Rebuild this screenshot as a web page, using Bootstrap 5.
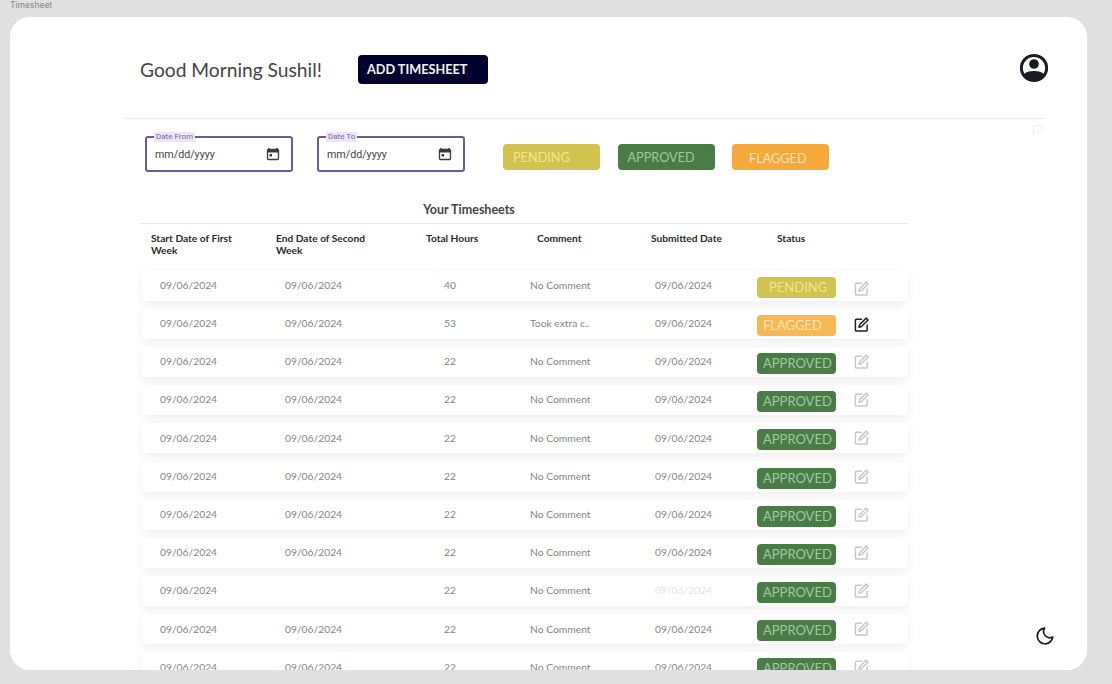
<!DOCTYPE html>
<html lang="en">
<head>
  <meta charset="UTF-8" />
  <meta name="viewport" content="width=device-width, initial-scale=1" />
  <title>Timesheet</title>
  <link href="https://cdn.jsdelivr.net/npm/bootstrap@5.3.0/dist/css/bootstrap.min.css" rel="stylesheet" />
  <style>
    html, body { height: 684px; overflow: hidden; }
    body { background: #e0e0e0; font-family: Lato, sans-serif; }
    .frame-label { font: 8.5px/1 Inter, sans-serif; color: #8a8a8a; padding: 1px 0 0 10px; height: 17px; }
    .frame {
      position: relative; margin-left: 10px; width: 1077px; height: 653px;
      background: #fff; border-radius: 20px; overflow: hidden;
    }
    .top-bar { height: 101px; padding: 37px 38px 0 130px; }
    .greeting { font-size: 19.2px; line-height: 32px; color: #444; width: 218px; margin: 0; }
    .add-btn {
      width: 130px; height: 29px; margin-top: 1px; padding: 0 0 0 9px; text-align: left; border-radius: 4px;
      background: #03012e; color: #f2f2f2; font-size: 12.7px; font-weight: 700; border: 0;
    }
    .add-btn:hover { background: #03012e; color: #fff; }
    .avatar-icon { margin-top: -1px; }
    .divider { margin: 0 42px 0 115px; height: 1px; background: #ececec; }
    .filters { padding: 17px 40px 0 135px; height: 82px; }
    .date-box {
      position: relative; width: 148px; height: 36px; padding: 0 18px 0 8px;
      border: 2px solid #6d5b98; border-radius: 3px; background: #fff;
      font: 10.7px Roboto, sans-serif; color: #444;
    }
    .date-label {
      position: absolute; left: 7px; top: -6px; padding: 0 2px; background: #ece5f4;
      font: 8px/10px Roboto, sans-serif; color: #75659d;
    }
    .legend-tag {
      width: 97px; height: 26px; margin-top: 8px; padding-left: 10px; border-radius: 4px;
      font-size: 12.7px; line-height: 26px;
    }
    .tag-pending { background: #d2c350; color: #efe88f; }
    .tag-approved { background: #4a7c46; color: #9fc9a2; }
    .tag-flagged { background: #f5a93b; color: #fde3bd; padding-left: 17px; line-height: 28px; }
    .sheet { width: 768px; margin-left: 130px; }
    .sheet-title {
      height: 23px; padding: 0 110px 0 0; margin: 0; font-size: 12.5px; font-weight: 700; line-height: 17px;
      color: #444; text-align: center; border-bottom: 1px solid #e8e8e8;
    }
    .sheet-head, .sheet-row { display: grid; margin-left: 2px; }
    .sheet-head {
      grid-template-columns: 125px 150px 111px 114px 126px 60px; padding: 8px 0 0 9px; height: 46.600px;
      font-size: 10.2px; font-weight: 700; line-height: 12px; color: #2a2a2a;
    }
    .sheet-row {
      grid-template-columns: 125px 159px 86px 125px 102px 97px 20px; align-items: center;
      height: 30px; margin-bottom: 8.2px; padding-left: 18px; background: #fff; border-radius: 4px;
      box-shadow: 0 3px 10px rgba(0, 0, 0, .07); font-size: 10.3px; color: #858585;
    }
    .row-faded { color: #e2e2e2; }
    .row-badge {
      display: block; width: 79px; height: 21px; margin-top: 3px; border-radius: 4px; padding-left: 6px;
      font-size: 13px; line-height: 21px; white-space: nowrap;
    }
    .row-flagged { background: #f6b952; color: #fde5bb; }
    .row-pending { padding-left: 12px; }
    .edit-icon { display: flex; margin-top: -1px; color: #c8c8c8; }
    .edit-dark { margin-top: 2px; color: #222; }
    .edit-first { margin-top: 5px; }
    .moon { position: absolute; left: 1026px; top: 610px; }
  </style>
</head>
<body>
  <div class="frame-label">Timesheet</div>
  <main class="frame">
    <header class="top-bar d-flex align-items-start">
      <h1 class="greeting fw-normal">Good Morning Sushil!</h1>
      <button class="btn add-btn">ADD TIMESHEET</button>
      <svg class="avatar-icon ms-auto" width="30" height="30" viewBox="0 0 30 30" aria-label="Profile">
        <circle cx="15" cy="15" r="12.600" fill="none" stroke="#1a1a22" stroke-width="3"/>
        <circle cx="15" cy="11" r="4.800" fill="#1a1a22"/>
        <path d="M5 21c2.800-2.400 6.300-3 10-3s7.200.6 10 3A12.500 12.500 0 0 1 15 27.500 12.500 12.500 0 0 1 5 21z" fill="#1a1a22"/>
      </svg>
    </header>
    <div class="divider"></div>

    <section class="filters d-flex align-items-start">
      <div class="date-box d-flex align-items-center justify-content-between me-4">
        <span class="date-label">Date From</span>
        <span>mm/dd/yyyy</span>
        <svg class="flex-shrink-0" style="margin-right:-7px" width="14" height="14" viewBox="0 0 14 14"><path d="M3 1v1.500M11 1v1.500" stroke="#3a3a3a" stroke-width="1.400"/><rect x="1.500" y="2.500" width="11" height="10" rx="1" fill="none" stroke="#3a3a3a" stroke-width="1.300"/><path d="M1.500 2.500h11V5.500h-11z" fill="#3a3a3a"/><rect x="3.500" y="7" width="2.500" height="2.500" fill="#3a3a3a"/></svg>
      </div>
      <div class="date-box d-flex align-items-center justify-content-between">
        <span class="date-label">Date To</span>
        <span>mm/dd/yyyy</span>
        <svg class="flex-shrink-0" style="margin-right:-7px" width="14" height="14" viewBox="0 0 14 14"><path d="M3 1v1.500M11 1v1.500" stroke="#3a3a3a" stroke-width="1.400"/><rect x="1.500" y="2.500" width="11" height="10" rx="1" fill="none" stroke="#3a3a3a" stroke-width="1.300"/><path d="M1.500 2.500h11V5.500h-11z" fill="#3a3a3a"/><rect x="3.500" y="7" width="2.500" height="2.500" fill="#3a3a3a"/></svg>
      </div>
      <div class="legend-tag tag-pending" style="margin-left:38px">PENDING</div>
      <div class="legend-tag tag-approved" style="margin-left:17.500px">APPROVED</div>
      <div class="legend-tag tag-flagged" style="margin-left:17.500px">FLAGGED</div>
      <svg class="ms-auto" style="margin-top:-12px;margin-right:3px" width="12" height="13" viewBox="0 0 12 13"><path d="M1.500 12.500V1.500h9.500l-1.500 3 1.500 3H1.500" fill="none" stroke="#f0f0f0"/></svg>
    </section>

    <section class="sheet">
      <h2 class="sheet-title">Your Timesheets</h2>
      <div class="sheet-head">
        <div>Start Date of First<br>Week</div>
        <div>End Date of Second<br>Week</div>
        <div>Total Hours</div>
        <div>Comment</div>
        <div>Submitted Date</div>
        <div>Status</div>
      </div>
      <div id="rows"></div>
    </section>

    <svg class="moon" width="18" height="18" viewBox="0 0 18 18" aria-label="Dark mode"><path d="M8.500 1.200a7.800 7.800 0 1 0 8.300 8.800 6.300 6.300 0 0 1-8.300-8.800z" fill="none" stroke="#1c1c1c" stroke-width="1.700" stroke-linejoin="round"/></svg>
  </main>

  <script>
    const rows = [
      ['09/06/2024', '09/06/2024', '40', 'No Comment', '09/06/2024', 'PENDING'],
      ['09/06/2024', '09/06/2024', '53', 'Took extra c..', '09/06/2024', 'FLAGGED'],
      ['09/06/2024', '09/06/2024', '22', 'No Comment', '09/06/2024', 'APPROVED'],
      ['09/06/2024', '09/06/2024', '22', 'No Comment', '09/06/2024', 'APPROVED'],
      ['09/06/2024', '09/06/2024', '22', 'No Comment', '09/06/2024', 'APPROVED'],
      ['09/06/2024', '09/06/2024', '22', 'No Comment', '09/06/2024', 'APPROVED'],
      ['09/06/2024', '09/06/2024', '22', 'No Comment', '09/06/2024', 'APPROVED'],
      ['09/06/2024', '09/06/2024', '22', 'No Comment', '09/06/2024', 'APPROVED'],
      ['09/06/2024', '', '22', 'No Comment', '09/06/2024', 'APPROVED', true],
      ['09/06/2024', '09/06/2024', '22', 'No Comment', '09/06/2024', 'APPROVED'],
      ['09/06/2024', '09/06/2024', '22', 'No Comment', '09/06/2024', 'APPROVED']
    ];
    const badgeClass = { PENDING: 'tag-pending row-pending', FLAGGED: 'row-flagged', APPROVED: 'tag-approved' };
    const editClass = { PENDING: 'edit-first', FLAGGED: 'edit-dark', APPROVED: '' };
    const editSvg = '<svg width="15" height="15" viewBox="0 0 16 16" fill="none" stroke="currentColor" stroke-width="1.600" stroke-linejoin="round" stroke-linecap="round"><path d="M8 2.500H2.500a1 1 0 0 0-1 1v10.500a1 1 0 0 0 1 1H13a1 1 0 0 0 1-1V8.500"/><path d="M13 1.200l2 2-7 7-2.700.700.700-2.700z"/></svg>';
    document.getElementById('rows').innerHTML = rows.map(r => `
      <div class="sheet-row">
        <div>${r[0]}</div>
        <div>${r[1]}</div>
        <div>${r[2]}</div>
        <div>${r[3]}</div>
        <div class="${r[6] ? 'row-faded' : ''}">${r[4]}</div>
        <div><span class="row-badge ${badgeClass[r[5]]}">${r[5]}</span></div>
        <div class="edit-icon ${editClass[r[5]]}">${editSvg}</div>
      </div>`).join('');
  </script>
  <script src="https://cdn.jsdelivr.net/npm/bootstrap@5.3.0/dist/js/bootstrap.bundle.min.js"></script>
</body>
</html>
